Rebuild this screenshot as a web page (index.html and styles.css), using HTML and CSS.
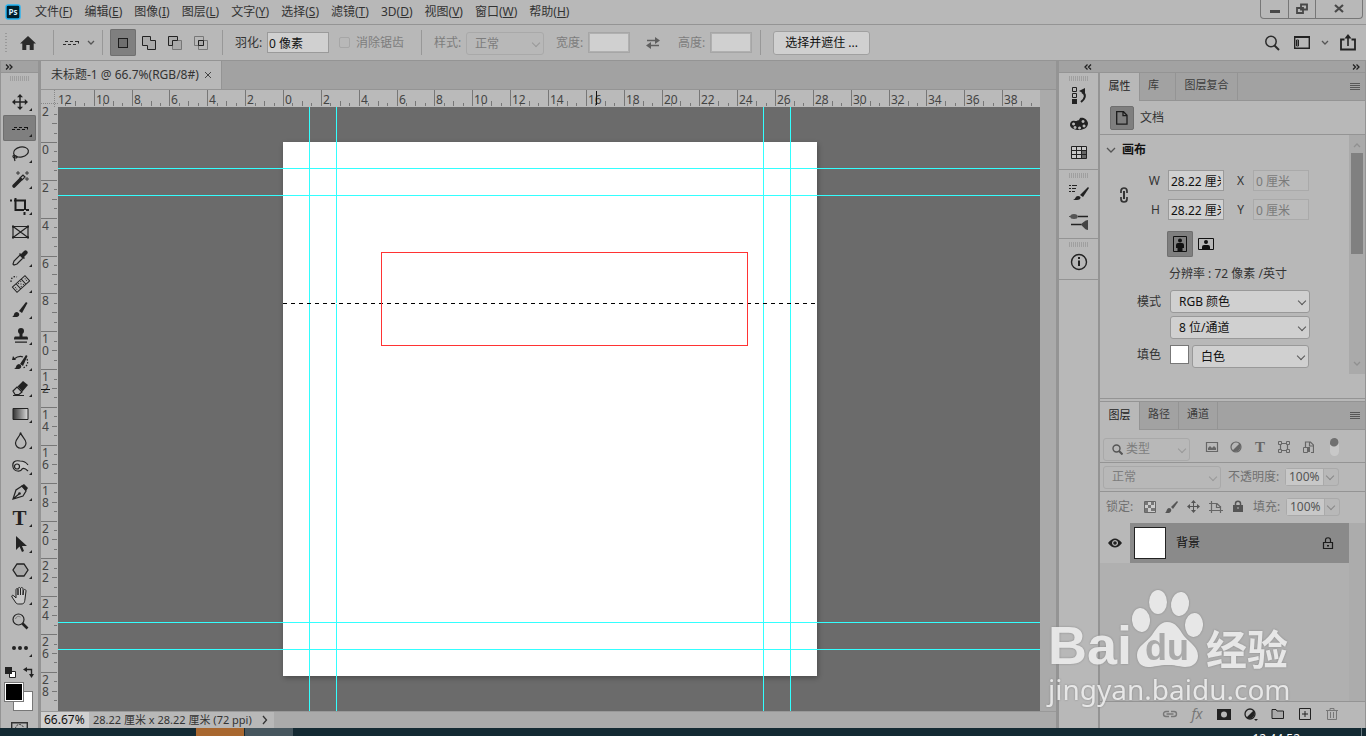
FILE: index.html
```html
<!DOCTYPE html>
<html lang="zh-CN">
<head>
<meta charset="utf-8">
<meta name="viewport" content="width=device-width, initial-scale=1">
<title>未标题-1</title>
<link rel="stylesheet" href="styles.css">
<script src="rulers.js" defer></script>
</head>
<body>
<header class="menubar">
  <svg class="logo" width="16" height="16" viewBox="0 0 16 16"><rect x="1" y="1" width="14" height="14" rx="2" fill="#001e2b" stroke="#20b4f5" stroke-width="1.4"/><text x="8" y="11" text-anchor="middle" class="logo-text">Ps</text></svg>
  <nav class="menus">
    <a href="#">文件(<u>F</u>)</a><a href="#">编辑(<u>E</u>)</a><a href="#">图像(<u>I</u>)</a><a href="#">图层(<u>L</u>)</a><a href="#">文字(<u>Y</u>)</a><a href="#">选择(<u>S</u>)</a><a href="#">滤镜(<u>T</u>)</a><a href="#">3D(<u>D</u>)</a><a href="#">视图(<u>V</u>)</a><a href="#">窗口(<u>W</u>)</a><a href="#">帮助(<u>H</u>)</a>
  </nav>
  <div class="window-buttons">
    <button aria-label="最小化"><svg width="12" height="12"><path d="M1 7h10v3H1z" fill="#484848"/></svg></button>
    <button aria-label="还原"><svg width="12" height="12"><path d="M5 1.500h6v5H5zM1 5h6v5H1z" fill="#b8b8b8" stroke="#484848" stroke-width="1.800"/></svg></button>
    <button aria-label="关闭" class="wide"><svg width="12" height="12"><path d="M2 2l8 7M10 2l-8 7" stroke="#484848" stroke-width="2.200"/></svg></button>
  </div>
</header>

<section class="options">
  <span class="grip-v"></span>
  <button class="home" aria-label="主页"><svg width="18" height="16"><path d="M9 1L1 8.500h2.300V15h4v-5h3.400v5h4V8.500H17z" fill="#2b2b2b"/></svg></button>
  <i class="sep"></i>
  <button class="tool-preset" aria-label="工具预设"><svg width="18" height="8"><path d="M1 5.500h3M6 5.500h3M11 5.500h3M3 2.500h3M8 2.500h3M13 2.500h4M16.500 2.500v2" stroke="#2b2b2b" fill="none"/></svg><svg width="8" height="6"><path d="M1 1l3 3 3-3" class="chev"/></svg></button>
  <i class="sep"></i>
  <div class="modes">
    <button class="on" aria-label="新选区"><svg width="14" height="14"><rect x="2.500" y="2.500" width="9" height="9" fill="#6f6f6f" stroke="#1c1c1c"/></svg></button>
    <button aria-label="添加到选区"><svg width="14" height="14"><path d="M.5.5h8v4h5v9h-8v-4h-5z" fill="#aaa" stroke="#222"/></svg></button>
    <button aria-label="从选区减去"><svg width="14" height="14"><path d="M4.500 4.500h9v9h-9z" fill="#aaa" stroke="#777"/><path d="M4.500 9.500h-4v-9h9v4h-5z" fill="#aaa" stroke="#222"/></svg></button>
    <button aria-label="与选区交叉"><svg width="14" height="14"><path d="M.5.5h9v9h-9zM4.500 4.500h9v9h-9z" fill="none" stroke="#777"/><path d="M4.500 4.500h5v5h-5z" fill="#aaa" stroke="#222"/></svg></button>
  </div>
  <i class="sep"></i>
  <label class="lbl" for="feather">羽化:</label>
  <input id="feather" class="field feather" value="0 像素">
  <label class="check off"><input type="checkbox" disabled>消除锯齿</label>
  <i class="sep style-sep"></i>
  <label class="lbl off" for="style">样式:</label>
  <span class="select off style-select"><select id="style" disabled><option>正常</option></select></span>
  <label class="lbl off" for="w">宽度:</label>
  <input id="w" class="field size" disabled>
  <svg class="swap" width="14" height="14"><path d="M1 4.500h9M4 9.500h9" stroke="#606060" stroke-width="1.600"/><path d="M9 1l5 3.500L9 8zM5 6L0 9.500 5 13z" fill="#606060"/></svg>
  <label class="lbl off" for="h">高度:</label>
  <input id="h" class="field size" disabled>
  <i class="sep"></i>
  <button class="push">选择并遮住 ...</button>
  <div class="options-right">
    <button aria-label="搜索"><svg width="16" height="16"><circle cx="7" cy="6.500" r="5.200" fill="none" stroke="#2b2b2b" stroke-width="1.500"/><path d="M10.500 10.500L15 15" stroke="#2b2b2b" stroke-width="2"/></svg></button>
    <button aria-label="工作区"><svg width="16" height="13"><path d="M.7.7h14.600v11.600H.7z" fill="none" stroke="#222" stroke-width="1.400"/><path d="M1 1.500h14" stroke="#222"/><path d="M2.500 4h2v6h-2zM2.500 6h2M2.500 8h2" fill="none" stroke="#222"/></svg></button>
    <button aria-label="工作区列表"><svg width="8" height="6"><path d="M1 1l3 3 3-3" class="chev"/></svg></button>
    <button aria-label="共享"><svg width="16" height="17"><path d="M4.500 5.500H1v10h14v-10h-3.500" fill="none" stroke="#222" stroke-width="1.800"/><path d="M8 12V2" stroke="#222" stroke-width="1.600"/><path d="M4.500 4.500L8 0l3.500 4.500z" fill="#222"/></svg></button>
  </div>
</section>

<main class="workspace">
  <aside class="toolbar">
    <div class="bar-head"><button aria-label="展开工具栏"><svg width="8" height="6"><path d="M1 .5L3.500 3 1 5.500M4.500 .5L7 3 4.500 5.500" class="dbl"/></svg></button></div>
    <span class="grip-h"></span>
    <div class="tools">
      <button class="more" aria-label="移动"><svg viewBox="0 0 20 20"><path d="M10 4v12M4 10h12" stroke="#222" stroke-width="1.400"/><path d="M10 2l3 3.200H7zM10 18l-3-3.200h6zM2 10l3.200-3v6zM18 10l-3.200 3V7z" fill="#222"/></svg></button>
      <button class="more on" aria-label="单行选框"><svg viewBox="0 0 20 20"><path d="M2 11.500h3M7 11.500h3M12 11.500h3M4 9.500h3M9 9.500h3M14 9.500h4M17.500 9.500v2" stroke="#111" fill="none"/></svg></button>
      <button class="more" aria-label="套索"><svg viewBox="0 0 20 20"><ellipse cx="11" cy="8" rx="7.500" ry="5" transform="rotate(-12 11 8)" class="ln"/><path d="M4 11c-2 1-1 3 1 3s3-1 1-2-2 2-1 5" class="ln"/></svg></button>
      <button class="more" aria-label="魔棒"><svg viewBox="0 0 20 20"><path d="M4 16l6.500-6.500" stroke="#222" stroke-width="3.600" stroke-linecap="round"/><path d="M10 8l3-3 2 2-3 3z" class="ln"/><path d="M8 1v4M6 3h4M17 1v4M15 3h4M17 7v4M15 9h4" stroke="#222" stroke-width=".8"/></svg></button>
      <button class="more" aria-label="裁剪"><svg viewBox="0 0 20 20"><path d="M0 4.500h2M4 4.500h11V14M5.500 2v12H14M16 14h3M14.500 16v3" fill="none" stroke="#1d1d1d" stroke-width="2"/></svg></button>
      <button aria-label="画框"><svg viewBox="0 0 20 20"><path d="M3 4.500h15v11H3zM3 4.500l15 11M18 4.500l-15 11" class="ln"/><path d="M2 3.500h2v2H2zM17 3.500h2v2h-2zM2 14.500h2v2H2zM17 14.500h2v2h-2z" fill="#222"/></svg></button>
      <button class="more" aria-label="吸管"><svg viewBox="0 0 20 20"><path d="M4 17l-1-1 1-3 6-6 3 3-6 6z" class="ln"/><path d="M9 6l5 5 1-1-1-1 3-3a2 2 0 0 0-3-3l-3 3-1-1z" fill="#222"/></svg></button>
      <button class="more" aria-label="修复画笔"><svg viewBox="0 0 20 20"><g transform="rotate(-42 11 10)"><path d="M2.500 6.500h17v7h-17zM7.500 6.500v7M14.500 6.500v7" fill="none" stroke="#222"/><path d="M9 8h1M12 8h1M9 12h1M12 12h1M10.500 10h1M4 9h1M4 11h1M17 9h1M17 11h1" stroke="#222"/></g><path d="M1 8c0-5 3-6 6-5" class="ln" stroke-dasharray="1.500 1.500"/></svg></button>
      <button class="more" aria-label="画笔"><svg viewBox="0 0 20 20"><path d="M9 11L16 2l1.500 1L12 13z" fill="#222"/><path d="M2 17c3-1 1-5 5-5 3 1 3 4 0 5z" fill="#222"/></svg></button>
      <button class="more" aria-label="仿制图章"><svg viewBox="0 0 20 20"><circle cx="11" cy="5" r="3" fill="#222"/><path d="M9.500 7h3v3.500H17c1 0 1 3 1 3H4s0-3 1-3h4.500zM5 15.500h12v1.200H5z" fill="#222"/></svg></button>
      <button class="more" aria-label="历史记录画笔"><svg viewBox="0 0 20 20"><path d="M10 12l6-9 1.500 1L13 14z" fill="#222"/><path d="M4 17c3-1 1-4 5-5 3 1 3 4 0 5z" fill="#222"/><path d="M4 7c4-3 7-3 9-2" class="ln"/><path d="M2 8l1-4 3 4z" fill="#222"/><path d="M17 7c2 5-1 8-4 9" class="ln" stroke-dasharray="1.500 1.500"/></svg></button>
      <button class="more" aria-label="橡皮擦"><svg viewBox="0 0 20 20"><path d="M3 13l4-4 5 5-3 2.500H5z" class="ln"/><path d="M7.500 8.500L13 3l5 4-5.500 6.500zM3 17h11v1H3z" fill="#222"/></svg></button>
      <button class="more" aria-label="渐变"><svg viewBox="0 0 20 20"><defs><linearGradient id="gr"><stop stop-color="#333"/><stop offset="1" stop-color="#ddd"/></linearGradient></defs><path d="M3 4.500h15v11H3z" fill="url(#gr)" stroke="#222"/></svg></button>
      <button class="more" aria-label="模糊"><svg viewBox="0 0 20 20"><path d="M10.500 2.500C10 7 5.500 9 5.500 13a5 5 0 0 0 10.500 0c0-4-4.500-6-5.500-10.500z" class="ln"/></svg></button>
      <button class="more" aria-label="减淡"><svg viewBox="0 0 20 20"><path d="M18 9c-2-3-5-4-8-4-5-1-8 1-7 6 1 5 8 5 9 2 2-2 4 0 6 2" fill="#c5c5c5" stroke="#222" stroke-width="1.200"/><circle cx="7" cy="10.500" r="2.500" class="ln"/></svg></button>
      <button class="more" aria-label="钢笔"><svg viewBox="0 0 20 20"><path d="M3 17l3-9 6-4 4 5-3 5zM3 17l6-5" class="ln"/><circle cx="9.500" cy="11.500" r="1.300" fill="#222"/><path d="M11 4l3-2 4 4-2 3z" fill="#222"/></svg></button>
      <button class="more" aria-label="文字"><span class="type-icon">T</span></button>
      <button class="more" aria-label="路径选择"><svg viewBox="0 0 20 20"><path d="M6 2v14l3.500-3.500L12 18l2-1-2-5h5z" fill="#222"/></svg></button>
      <button class="more" aria-label="多边形"><svg viewBox="0 0 20 20"><path d="M7 4h7l4 6-4 6H7l-4-6z" fill="#aaa" stroke="#222" stroke-width="1.300"/></svg></button>
      <button class="more" aria-label="抓手"><svg viewBox="0 0 20 20"><path d="M6 17L2 11c-1-2 1-2 2-1l2 2V4c0-2 2-2 2 0v5V3c0-2 2.500-2 2.500 0v6V3c0-2 2.500-2 2.500 0v6l.5-4c0-2 2.500-2 2.500 0l-1 8c-.5 4-1 5-4 5H9c-1 0-2 0-3-1z" fill="#c8c8c8" stroke="#222"/></svg></button>
      <button aria-label="缩放"><svg viewBox="0 0 20 20"><circle cx="8.500" cy="7.500" r="5.500" class="ln"/><path d="M5.500 7c1-3 3-3 5-2" fill="none" stroke="#777"/><path d="M12.500 11.500L17.500 16.500" stroke="#222" stroke-width="2.600"/></svg></button>
      <button class="more" aria-label="编辑工具栏"><svg viewBox="0 0 20 20"><path d="M2 10a2 2 0 1 0 4 0 2 2 0 1 0-4 0zM8 10a2 2 0 1 0 4 0 2 2 0 1 0-4 0zM14 10a2 2 0 1 0 4 0 2 2 0 1 0-4 0z" fill="#222"/></svg></button>
    </div>
    <div class="swatch-actions">
      <button aria-label="默认颜色"><svg width="11" height="11"><path d="M4.500 4.500h6v6h-6z" fill="#fff" stroke="#222"/><path d="M0 0h7v7H0z" fill="#222"/></svg></button>
      <button aria-label="切换颜色"><svg width="11" height="11"><path d="M3 2.500h5.500V8" fill="none" stroke="#222" stroke-width="1.400"/><path d="M4 0v5L0 2.500zM6 7h5L8.500 11z" fill="#222"/></svg></button>
    </div>
    <div class="swatches"><button class="bg" aria-label="背景色"></button><button class="fg" aria-label="前景色"></button></div>
    <button class="quick-mask" aria-label="快速蒙版"><svg width="18" height="14"><path d="M.7.7h15.600v12H.7z" fill="none" stroke="#333" stroke-width="1.400"/><circle cx="8.500" cy="6.500" r="4" fill="none" stroke="#333" stroke-dasharray="2 1"/></svg></button>
  </aside>

  <section class="document">
    <div class="doc-tabs"><div class="doc-tab"><span>未标题-1 @ 66.7%(RGB/8#)</span><button aria-label="关闭文档"><svg width="8" height="8"><path d="M1 1l6 6M7 1L1 7" stroke="#444"/></svg></button></div></div>
    <div class="view">
      <span class="corner"></span>
      <svg class="ruler ruler-h" id="ruler-h"></svg>
      <svg class="ruler ruler-v" id="ruler-v"></svg>
      <div class="canvas">
        <div class="artboard"></div>
        <i class="guide v v1"></i><i class="guide v v2"></i><i class="guide v v3"></i><i class="guide v v4"></i>
        <i class="guide h h1"></i><i class="guide h h2"></i><i class="guide h h3"></i><i class="guide h h4"></i>
        <i class="marquee"></i>
        <i class="frame"></i>
      </div>
      <span class="gutter"></span>
    </div>
    <footer class="status"><input class="zoom" aria-label="缩放比例" value="66.67%"><span class="info">28.22 厘米 x 28.22 厘米 (72 ppi)</span><button aria-label="状态信息"><svg width="6" height="10"><path d="M1 1l3.500 4L1 9" fill="none" stroke="#333" stroke-width="1.300"/></svg></button></footer>
  </section>

  <aside class="dock">
    <div class="bar-head dock-head">
      <button aria-label="展开面板"><svg width="8" height="6"><path d="M3.500 .5L1 3l2.500 2.500M7 .5L4.500 3 7 5.500" class="dbl"/></svg></button>
      <button aria-label="折叠为图标"><svg width="8" height="6"><path d="M1 .5L3.500 3 1 5.500M4.500 .5L7 3 4.500 5.500" class="dbl"/></svg></button>
    </div>
    <div class="icon-dock">
      <div class="icon-group">
        <span class="grip-h"></span>
        <button aria-label="历史记录"><svg viewBox="0 0 20 20"><path d="M3.500 1.500h4v4h-4zM3.500 7.500h4v4h-4z" fill="none" stroke="#222"/><path d="M3 13h5v5H3z" fill="#222"/><path d="M12 16c5-4 5-8 1-10" fill="none" stroke="#222" stroke-width="2"/><path d="M10 5l6-3v6z" fill="#222"/></svg></button>
        <button aria-label="颜色"><svg viewBox="0 0 20 20"><path fill-rule="evenodd" d="M11 4c2-1 7 0 8 5 0 5-5 7-9 7S1 14 1 11s2-5 5-4c2 0 4 0 5-3zM4.500 8.500a1.500 1.500 0 1 0 .1 0zM6 12a1.500 1.500 0 1 0 .1 0zM10.500 12.500a1.500 1.500 0 1 0 .1 0zM15 10.500a1.500 1.500 0 1 0 .1 0zM14 6a1.500 1.500 0 1 0 .1 0z" fill="#222"/></svg></button>
        <button aria-label="色板"><svg viewBox="0 0 20 20"><path d="M2 4h16v12H2z" fill="#c8c8c8"/><path d="M12 8h6v8h-6z" fill="#666"/><path d="M2.500 4.500h15v12h-15zM2.500 8.500h15M2.500 12.500h15M7.500 4v12M12.500 4v12" fill="none" stroke="#222"/></svg></button>
      </div>
      <div class="icon-group">
        <span class="grip-h"></span>
        <button aria-label="画笔"><svg viewBox="0 0 20 20"><path d="M0 2.500h2M3 2.500h5M0 5.500h2M3 5.500h4M0 8.500h2M3 8.500h3" stroke="#222"/><path d="M11 12l8-8 1 1-6 9z" fill="#222"/><path d="M4 17c3-1 2-4 5-4 4 0 3 4-1 4z" fill="#222"/></svg></button>
        <button aria-label="画笔设置"><svg viewBox="0 0 20 20"><path d="M9 5.500h10M2 13.500h10" stroke="#222" stroke-width="1.600"/><ellipse cx="5" cy="5.500" rx="3.800" ry="2.500" fill="#555"/><path d="M0 5h3v1H0z" fill="#555"/><path d="M12 13c2-1 4-4 7-4v10c-3 0-4-3-7-5z" fill="#444"/></svg></button>
      </div>
      <div class="icon-group">
        <span class="grip-h"></span>
        <button aria-label="信息"><svg viewBox="0 0 20 20"><circle cx="10" cy="10" r="7.500" fill="none" stroke="#222" stroke-width="1.400"/><path d="M9 5h2v2H9zM9 8.500h2V14H9z" fill="#222"/></svg></button>
      </div>
    </div>
    <div class="panels">
      <section class="panel props">
        <div class="tabs"><button class="active">属性</button><button class="lib">库</button><button class="comps">图层复合</button><button class="panel-menu" aria-label="面板菜单"></button></div>
        <div class="doc-row"><span class="doc-icon"><svg width="12" height="14"><path d="M.7.7h6.800l3.500 3.600v8.900H.7zM7 .7v4h4" fill="none" stroke="#1c1c1c" stroke-width="1.300"/></svg></span>文档</div>
        <div class="props-body">
          <div class="props-form">
            <h2><svg width="10" height="7"><path d="M1 1l4 4 4-4" class="chev"/></svg>画布</h2>
            <div class="dims">
              <button class="link" aria-label="链接宽高"><svg width="10" height="16"><path d="M2 6V4c0-4 6-4 6 0v2M2 10v2c0 4 6 4 6 0v-2" fill="none" stroke="#333" stroke-width="1.700"/><path d="M5 4v8" stroke="#333" stroke-width="2"/></svg></button>
              <label for="cw">W</label><input id="cw" class="field" value="28.22 厘米"><label for="cx">X</label><input id="cx" class="field" value="0 厘米" disabled>
              <label for="ch">H</label><input id="ch" class="field" value="28.22 厘米"><label for="cy">Y</label><input id="cy" class="field" value="0 厘米" disabled>
            </div>
            <div class="orient">
              <button class="on" aria-label="纵向"><svg width="14" height="16"><path d="M.5.5h13v15H.5z" fill="none" stroke="#111"/><circle cx="7" cy="4.500" r="2" fill="#111"/><path d="M3 9q0-2 2-2h4q2 0 2 2v3H9.500v3h-5v-3H3z" fill="#111"/></svg></button>
              <button aria-label="横向"><svg width="16" height="12"><path d="M.5.5h15v11H.5z" fill="none" stroke="#111"/><circle cx="8" cy="4" r="2" fill="#111"/><path d="M4 11V9q0-2 2-2h4q2 0 2 2v2z" fill="#111"/></svg></button>
            </div>
            <p class="resolution">分辨率 : 72 像素 /英寸</p>
            <div class="mode">
              <label for="mode">模式</label><span class="select"><select id="mode"><option>RGB 颜色</option></select></span>
              <span class="select second"><select aria-label="位深"><option>8 位/通道</option></select></span>
            </div>
            <div class="fill"><label for="fill">填色</label><button class="chip" aria-label="画布颜色"></button><span class="select"><select id="fill"><option>白色</option></select></span></div>
          </div>
          <div class="scroll"><svg width="8" height="6"><path d="M1 5l3-3 3 3" class="chev faint"/></svg><i></i><svg width="8" height="6"><path d="M1 1l3 3 3-3" class="chev faint"/></svg></div>
        </div>
      </section>
      <section class="panel layers">
        <div class="tabs"><button class="active">图层</button><button>路径</button><button>通道</button><button class="panel-menu" aria-label="面板菜单"></button></div>
        <div class="row filter">
          <span class="select off kind"><svg width="11" height="11"><circle cx="4.500" cy="4.500" r="3.500" fill="none" stroke="#555" stroke-width="1.400"/><path d="M7 7l3.500 3.500" stroke="#555" stroke-width="2"/></svg><select aria-label="筛选类型" disabled><option>类型</option></select></span>
          <button aria-label="像素图层"><svg width="14" height="12"><path d="M1.500 1.500h11v9h-11z" class="g"/><path d="M3 9V7l2-2 2 2 2-2 2 2v2z" fill="#666"/></svg></button>
          <button aria-label="调整图层"><svg width="12" height="12"><circle cx="6" cy="6" r="5" class="g"/><path d="M9.500 2.500a5 5 0 0 1-7 7z" fill="#666"/></svg></button>
          <button aria-label="文字图层"><span class="type-small">T</span></button>
          <button aria-label="形状图层"><svg width="12" height="12"><path d="M2.500 2.500h7v7h-7z" class="g"/><path d="M.5.5h3v3h-3zM8.500.5h3v3h-3zM.5 8.500h3v3h-3zM8.500 8.500h3v3h-3z" fill="#b8b8b8" stroke="#666"/></svg></button>
          <button aria-label="智能对象"><svg width="12" height="13"><path d="M3.500 6V1h5l3 3v7.500H9M7.500 1v4h4" class="g"/><path d="M1.500 6.500h4v5h-4z" fill="#b8b8b8" stroke="#666"/><path d="M5 6h3v5H5z" fill="#666"/></svg></button>
          <button class="toggle" aria-label="筛选开关"></button>
        </div>
        <div class="row">
          <span class="select off blend"><select aria-label="混合模式" disabled><option>正常</option></select></span>
          <label for="opacity">不透明度:</label><span class="percent"><input id="opacity" value="100%" disabled><i class="drop"></i></span>
        </div>
        <div class="row lock">
          <span>锁定:</span>
          <button aria-label="锁定透明像素"><svg width="12" height="12"><path d="M.5.5h11v11H.5z" fill="#ccc" stroke="#666"/><path d="M1 1h3v3H1zM7 1h3v3H7zM4 4h3v3H4zM1 7h3v4H1zM7 7h4v3H7z" fill="#777"/></svg></button>
          <button aria-label="锁定图像像素"><svg width="13" height="13"><path d="M6 7l6-6 1 1-5 7z" fill="#555"/><path d="M0 13c2-1 1-4 4-5 3 0 3 4 0 5z" fill="#555"/></svg></button>
          <button aria-label="锁定位置"><svg width="13" height="13"><path d="M6.500 2v9M2 6.500h9" stroke="#555"/><path d="M6.500 0l2.500 3H4zM6.500 13L4 10h5zM0 6.500L3 4v5zM13 6.500L10 9V4z" fill="#555"/></svg></button>
          <button aria-label="防止嵌套"><svg width="14" height="12"><path d="M2.500 0v12M0 2.500h8l3 3M11.500 5v7M0 9.500h14M7.500 3v3.500H11" class="g"/></svg></button>
          <button aria-label="全部锁定"><svg width="12" height="13"><path d="M1 5h10v7H1z" fill="#555"/><path d="M3.500 5V3.500c0-3 5-3 5 0V5" fill="none" stroke="#555" stroke-width="1.500"/><path d="M5.500 7h1v2h-1z" fill="#bbb"/></svg></button>
          <label for="fillpct">填充:</label><span class="percent"><input id="fillpct" value="100%" disabled><i class="drop"></i></span>
        </div>
        <div class="list">
          <div class="items"><div class="layer">
            <button class="eye" aria-label="可见性"><svg width="14" height="10"><path fill-rule="evenodd" d="M0 5q7-9 14 0-7 9-14 0zM7 2a3 3 0 1 0 .1 0z" fill="#222"/><circle cx="7" cy="5" r="1.800" fill="#222"/></svg></button>
            <div class="layer-main"><span class="thumb"></span><span class="name">背景</span><svg width="12" height="13"><path d="M1.500 5.500h9v6h-9zM3.500 5V3c0-3 5-3 5 0v2" fill="none" stroke="#1c1c1c" stroke-width="1.200"/><path d="M5 8h2v1.500H5z" fill="#1c1c1c"/></svg></div>
          </div></div>
          <div class="track"></div>
        </div>
        <footer class="layer-actions">
          <button aria-label="链接图层"><svg width="16" height="10"><path d="M7 2.500H4a2.500 2.500 0 0 0 0 5h3M9 2.500h3a2.500 2.500 0 0 1 0 5H9M4.500 5h7" fill="none" stroke="#777" stroke-width="1.400"/></svg></button>
          <button class="fx" aria-label="图层样式">fx</button>
          <button aria-label="添加蒙版"><svg width="14" height="11"><path d="M0 0h14v11H0z" fill="#222"/><circle cx="7" cy="5.500" r="3" fill="#b8b8b8"/></svg></button>
          <button aria-label="新建调整图层"><svg width="14" height="13"><circle cx="6" cy="6" r="5" fill="none" stroke="#222" stroke-width="1.300"/><path d="M9.500 2.500a5 5 0 0 1-7 7z" fill="#222"/><path d="M10 11h4l-2 2z" fill="#222"/></svg></button>
          <button aria-label="新建组"><svg width="14" height="12"><path d="M1 1.500h4l1 1.500h6.500v7.500H1z" fill="#aaa" stroke="#222"/></svg></button>
          <button aria-label="新建图层"><svg width="12" height="12"><path d="M.5.5h11v11H.5zM6 3v6M3 6h6" fill="none" stroke="#222"/></svg></button>
          <button aria-label="删除图层"><svg width="12" height="12"><path d="M0 2.500h12M4 2V.5h4V2M1.500 3v8.500h9V3M4.500 4v6M7.500 4v6" fill="none" stroke="#777"/></svg></button>
        </footer>
      </section>
    </div>
  </aside>
</main>

<footer class="taskbar"><span class="task hot"></span><span class="task"></span><time>12:44:52</time><i class="peek"></i></footer>

<div class="watermark">
  <div class="brand"><span class="bai">Bai</span><svg width="72" height="80" viewBox="0 0 72 80"><g fill="#ececec"><ellipse cx="10" cy="31" rx="9" ry="12" transform="rotate(-6 10 31)"/><ellipse cx="27" cy="13" rx="9" ry="12"/><ellipse cx="49" cy="15" rx="9" ry="12" transform="rotate(8 49 15)"/><ellipse cx="63" cy="36" rx="9" ry="12" transform="rotate(4 63 36)"/><path d="M36 33c9 0 12 7 17 14 6 7 14 11 14 20 0 8-7 11-13 11-8-1-10-2-18-2s-12 2-19 2C10 78 6 73 6 66c0-9 9-12 15-20 4-6 8-13 15-13z"/></g><text x="36" y="71" text-anchor="middle" class="du">du</text></svg><span class="jy">经验</span></div>
  <div class="site">jingyan.baidu.com</div>
</div>
</body>
</html>
```
FILE: styles.css
```css
* { box-sizing: border-box; }
html, body { height: 100%; }
body {
  --bg: #b8b8b8;
  --tab: #a2a2a2;
  --line: #949494;
  --dark: #7f7f7f;
  --field: #d0d0d0;
  margin: 0;
  display: flex;
  flex-direction: column;
  overflow: hidden;
  background: var(--bg);
  color: #333;
  font: 12px/16px "Noto Sans", "Noto Sans CJK SC", sans-serif;
}
button, input, select { font: inherit; color: inherit; }
button { border: 0; padding: 0; background: none; display: flex; align-items: center; justify-content: center; }
svg { display: block; flex: none; }
input { min-width: 0; }
a { color: inherit; text-decoration: none; }
.chev { fill: none; stroke: #555; stroke-width: 1.3; }
.faint { stroke: #909090; }
.dbl { fill: none; stroke: #222; stroke-width: 1.3; }
.ln { fill: none; stroke: #222; stroke-width: 1.2; }
.g { fill: none; stroke: #666; stroke-width: 1.2; }

.menubar { flex: 0 0 25px; display: flex; border-bottom: 1px solid var(--line); padding-left: 5px; }
.logo { margin-top: 4px; }
.logo-text { font: bold 8px "Open Sans", sans-serif; fill: #d6f0ff; }
.menus { display: flex; gap: 12px; align-items: center; padding-left: 14px; white-space: nowrap; }
.window-buttons { margin: 0 3px 0 auto; display: flex; height: 19px; border: 1px solid #777; border-top: 0; border-radius: 0 0 4px 4px; }
.window-buttons button { width: 27px; }
.window-buttons button + button { border-left: 1px solid #777; }
.window-buttons .wide { width: 47px; }

.options { flex: 0 0 36px; display: flex; align-items: center; border-bottom: 1px solid var(--line); padding: 0 10px 0 5px; white-space: nowrap; }
.grip-v { width: 2px; height: 20px; background: repeating-linear-gradient(#999 0 1px, transparent 1px 3px); }
.home { margin: 0 16px 0 12px; }
.sep { width: 1px; height: 25px; background: #989898; flex: none; }
.tool-preset { gap: 7px; margin: 0 7px; width: 34px; }
.modes { display: flex; margin: 0 8px 0 7px; }
.modes button { width: 26px; height: 27px; border-radius: 2px; }
.on { background: var(--dark); box-shadow: inset 0 0 0 1px #6f6f6f; }
.lbl { margin: 0 4px 0 12px; width: 28px; }
.field { height: 21px; border: 1px solid #9a9a9a; background: var(--field); padding: 0 2px; color: #111; border-radius: 0; }
.field:disabled { border-color: #aaa; background: #bbb; color: #7a7a7a; }
.feather { width: 62px; padding: 0 1px; }
.check { display: flex; align-items: center; gap: 6px; margin-left: 10px; }
.check input { appearance: none; width: 11px; height: 11px; margin: 0; border: 1px solid #a6a6a6; border-radius: 2px; }
.off { color: #7d7d7d; }
.style-sep { margin-left: 17px; }
.select { position: relative; display: flex; height: 23px; border: 1px solid #999; border-radius: 3px; background: var(--field); color: #111; }
.select select { appearance: none; width: 100%; border: 0; background: none; padding: 0 16px 0 8px; color: inherit; opacity: 1; }
.select::after, .drop::after { content: ""; position: absolute; right: 4px; top: 7px; width: 5px; height: 5px; border: solid #555; border-width: 0 1px 1px 0; transform: rotate(45deg); }
.select.off { border-color: #a9a9a9; background: transparent; color: #7d7d7d; }
.select.off::after { border-color: #999; }
.style-select { width: 78px; margin-top: 2px; }
.size { width: 42px; }
.size:disabled { background: var(--field); border: 2px solid #b0b0b0; outline-offset: -1px; outline: 1px solid #a6a6a6; }
.size + .sep { margin-left: 8px; }
.swap { margin: 0 6px 0 16px; }
.push { height: 24px; width: 97px; margin-left: 12px; border: 1px solid #a0a0a0; border-radius: 3px; background: var(--field); color: #111; }
.options-right { display: flex; align-items: center; gap: 11px; margin-left: auto; }
.options-right button:nth-child(2) { margin-left: 3px; }

.workspace { flex: 1; min-height: 0; display: grid; grid-template-columns: 40px minmax(0, 1fr) 309px; }
.bar-head { height: 12px; background: var(--tab); border-bottom: 1px solid var(--line); display: flex; align-items: center; flex: none; }
.grip-h { display: block; width: 20px; height: 5px; background: repeating-linear-gradient(90deg, #999 0 1px, transparent 1px 2px); opacity: .8; }
.toolbar { border: solid var(--line); border-width: 0 2px 0 1px; overflow: hidden; min-height: 0; }
.toolbar .bar-head { padding-left: 4px; }
.toolbar .grip-h { margin: 3px auto 8px; }
.tools { display: flex; flex-direction: column; padding-left: 2px; }
.tools button { position: relative; width: 33px; height: 26px; border-radius: 2px; }
.tools svg { width: 20px; height: 20px; }
.more::after { content: ""; position: absolute; right: 4px; bottom: 4px; border: solid transparent; border-width: 3px 0 0 3px; border-right: 3px solid #222; border-left-width: 0; border-bottom: 0; }
.type-icon { font: bold 21px/20px "Liberation Serif", serif; color: #222; }
.swatch-actions { display: flex; gap: 7px; margin: 6px 0 0 4px; height: 11px; }
.swatches { position: relative; width: 29px; height: 29px; margin: 4px 0 0 3px; }
.swatches button { position: absolute; width: 20px; height: 20px; border: 1px solid #777; }
.fg { left: 0; top: 0; background: #000; box-shadow: inset 0 0 0 1px #fff; }
.bg { left: 9px; top: 9px; background: #fff; }
.quick-mask { margin: 11px 0 0 10px; }

.document { display: flex; flex-direction: column; min-width: 0; min-height: 0; border-right: 1px solid var(--line); border-left: 1px solid var(--line); }
.doc-tabs { flex: 0 0 29px; background: var(--tab); border-bottom: 1px solid var(--line); display: flex; }
.doc-tab { display: flex; align-items: center; gap: 5px; padding: 0 9px 0 10px; background: var(--bg); border-right: 1px solid var(--line); white-space: nowrap; }
.view { flex: 1; min-height: 0; display: grid; grid-template: 17px minmax(0, 1fr) / 17px minmax(0, 1fr) 16px; background: #aaa; }
.corner { background: repeating-linear-gradient(90deg, #888 0 1px, transparent 1px 2px) 0 13px / 100% 1px no-repeat, repeating-linear-gradient(#888 0 1px, transparent 1px 2px) 13px 0 / 1px 100% no-repeat, #bababa; }
.ruler { width: 100%; height: 100%; background: #bababa; overflow: hidden; font-size: 12px; }
.ruler text { fill: #444; }
.ruler .tick { stroke: #777; }
.ruler .cursor { stroke: #111; }
.ruler-h { grid-area: 1 / 2; }
.ruler-v { grid-area: 2 / 1; }
.gutter { grid-area: 1 / 3 / 3 / 4; }
.canvas { grid-area: 2 / 2; position: relative; overflow: hidden; background: #6b6b6b; }
.artboard { position: absolute; left: 225px; top: 35px; width: 534px; height: 534px; background: #fff; box-shadow: 1px 2px 5px rgba(0, 0, 0, .3); }
.guide { position: absolute; background: #3ff; }
.v { width: 1px; top: 0; bottom: 0; }
.h { height: 1px; left: 0; right: 0; }
.v1 { left: 251px; } .v2 { left: 278px; } .v3 { left: 705px; } .v4 { left: 732px; }
.h1 { top: 61px; } .h2 { top: 88px; } .h3 { top: 515px; } .h4 { top: 542px; }
.marquee { position: absolute; left: 225px; top: 196px; width: 534px; height: 1px; background: repeating-linear-gradient(90deg, #000 0 4px, #fff 4px 8px); }
.frame { position: absolute; left: 323px; top: 145px; width: 367px; height: 94px; border: 1px solid #f33; }
.status { flex: 0 0 17px; display: flex; background: #aaa; border-top: 1px solid #999; }
.zoom { width: 48px; border: 0; padding: 0 3px; background: var(--field); color: #111; }
.info { padding: 0 4px; background: var(--bg); white-space: nowrap; font-size: 11px; }
.status button { padding: 0 6px; background: var(--bg); }

.dock { display: grid; grid-template: 12px minmax(0, 1fr) / 41px minmax(0, 1fr); min-height: 0; border: solid var(--line); border-width: 0 1px 0 2px; }
.dock-head { grid-column: 1 / -1; justify-content: space-between; padding: 0 5px 0 25px; }
.icon-dock { border-right: 2px solid var(--line); }
.icon-group { display: flex; flex-direction: column; align-items: center; padding: 3px 0; border-bottom: 1px solid var(--line); }
.icon-group .grip-h { margin-bottom: 1px; }
.icon-group button { width: 38px; height: 28px; }
.icon-group svg { width: 20px; height: 20px; }
.panels { display: flex; flex-direction: column; min-height: 0; }
.tabs { height: 28px; display: flex; background: var(--tab); border-bottom: 1px solid var(--line); font-size: 11px; }
.tabs button { width: 39px; border-right: 1px solid var(--line); color: #3c3c3c; padding-bottom: 3px; }
.tabs .active { width: 40px; background: var(--bg); margin-bottom: -1px; color: #222; }
.tabs .lib { width: 36px; padding-right: 8px; }
.tabs .comps { width: 62px; }
.tabs .panel-menu { width: 10px; height: 8px; margin: 10px 5px 0 auto; padding: 0; border: 0; background: repeating-linear-gradient(#444 0 1px, transparent 1px 2px); background-size: 100% 7px; background-repeat: no-repeat; opacity: .8; }
.props { flex: 0 0 326px; border-bottom: 1px solid var(--line); }
.doc-row { height: 34px; display: flex; align-items: center; gap: 6px; padding-left: 10px; border-bottom: 1px solid var(--line); }
.doc-icon { width: 24px; height: 24px; background: var(--dark); border: 1px solid #6f6f6f; border-radius: 2px; display: grid; place-items: center; }
.props-body { display: flex; justify-content: space-between; }
.props-form { padding: 7px 0 0 6px; width: 204px; flex: 1; }
.props h2 { margin: 0 0 12px; font-size: 12px; line-height: 16px; color: #111; display: flex; align-items: center; gap: 6px; }
.dims { display: grid; grid-template-columns: 20px 24px 56px 19px 56px; gap: 8px 5px; align-items: center; padding-left: 8px; }
.dims label { text-align: right; padding-right: 3px; }
.dims label:nth-of-type(even) { padding-right: 4px; }
.link { grid-row: 1 / 3; }
.dims .field { width: 56px; }
.orient { display: flex; align-items: center; gap: 5px; margin: 11px 0 0 61px; }
.orient button { width: 26px; height: 26px; border-radius: 2px; }
.orient button + button { width: 16px; }
.resolution { margin: 9px 0 8px 63px; }
.mode { display: grid; grid-template-columns: 25px 140px; gap: 3px 8px; align-items: center; padding-left: 31px; }
.second { grid-column: 2; }
.fill { display: grid; grid-template-columns: 25px 19px 118px; column-gap: 8px; padding: 6px 0 0 31px; }
.fill label { padding-top: 2px; }
.fill .select { width: 117px; margin-left: -5px; }
.chip { height: 19px; background: #fff; border: 1px solid #777; }
.scroll { width: 16px; height: 239px; background: #aaa; display: flex; flex-direction: column; align-items: center; padding: 7px 0; }
.scroll i { width: 12px; height: 101px; margin: 5px 0 auto; background: #808080; }
.layers { flex: 1; min-height: 0; display: flex; flex-direction: column; margin-top: 2px; border-top: 1px solid var(--line); }
.layers .tabs { flex: 0 0 28px; }
.row { flex: 0 0 29px; display: flex; align-items: center; border-bottom: 1px solid var(--line); padding-left: 3px; color: #707070; white-space: nowrap; }
.filter { flex-basis: 33px; gap: 12px; padding-top: 6px; }
.filter > button { width: 12px; height: 14px; margin-top: -4px; }
.kind { width: 87px; height: 23px; align-items: center; padding-left: 8px; margin-right: 4px; }
.kind select { padding-left: 3px; }
.type-small { font: bold 15px/14px "Liberation Serif", serif; color: #666; }
.filter .toggle { width: 9px; height: 18px; border-radius: 5px; margin-left: 4px; background: radial-gradient(circle at 4px 4px, #707070 0 4px, #c8c8c8 5px); }
.blend { width: 118px; margin-right: 7px; }
.row label { width: 53px; }
.percent { position: relative; display: flex; width: 54px; height: 18px; margin-left: 4px; border: 1px solid #aaa; border-radius: 3px; }
.percent input { width: 37px; border: 0; padding: 0 3px; background: #c8c8c8; color: #555; }
.drop { position: relative; flex: 1; border-left: 1px solid #aaa; }
.drop::after { top: 4px; right: 5px; border-color: #888; }
.lock { flex-basis: 31px; border: 0; gap: 9px; padding: 0 0 2px 6px; }
.lock button { width: 13px; height: 14px; }
.lock > span:first-child { width: 28px; }
.lock label { width: 29px; }
.lock .percent { margin-left: -5px; }
.list { flex: 1; min-height: 0; display: flex; background: #b0b0b0; border-bottom: 1px solid var(--line); }
.items { flex: 1; }
.track { width: 16px; background: #acacac; }
.layer { height: 40px; display: flex; background: var(--bg); }
.eye { width: 30px; }
.layer-main { flex: 1; display: flex; align-items: center; background: #8a8a8a; color: #111; padding: 0 15px 0 4px; }
.thumb { width: 32px; height: 32px; border: 1px solid #222; background: #fff; }
.name { margin: 0 auto 0 10px; }
.layer-actions { flex: 0 0 26px; display: flex; align-items: center; justify-content: flex-end; gap: 11px; padding: 0 25px 2px 0; }
.layer-actions button { width: 16px; height: 16px; }
.fx { font: italic 14px/16px "Noto Sans", sans-serif; color: #777; }

.taskbar { flex: 0 0 8px; display: flex; overflow: hidden; background: #142a33; padding: 0 4px 0 196px; }
.task { width: 48px; margin-right: 1px; background: #46565e; }
.hot { background: #a8672f; }
.taskbar time { margin: 3px 61px 0 auto; color: #fff; }
.peek { width: 1px; background: #6b7b82; }

.watermark { position: absolute; right: 75px; bottom: 27px; width: 243px; color: #ececec; opacity: .92; filter: drop-shadow(0 0 1px #888); pointer-events: none; }
.brand { display: flex; align-items: flex-end; height: 80px; }
.bai { width: 83px; font: bold 54px/48px "Liberation Sans", sans-serif; }
.du { font: bold 36px "Liberation Sans", sans-serif; fill: #aaa; }
.jy { font: bold 41px/44px "Noto Sans CJK SC", sans-serif; margin-left: 3px; white-space: nowrap; }
.site { font: 28px/40px "Noto Sans", sans-serif; }
```
FILE: rulers.js
```js
// Draws both rulers: one labelled division is 2 cm, split in four ticks.
const NS = "http://www.w3.org/2000/svg";
const STEP = 37.85;

function add(parent, tag, attrs, text) {
  const el = document.createElementNS(NS, tag);
  for (const key in attrs) el.setAttribute(key, attrs[key]);
  if (text !== undefined) el.textContent = text;
  parent.appendChild(el);
}

function line(svg, horizontal, at, from, to, cls) {
  const p = Math.round(at) + 0.5;
  add(svg, "line", horizontal
    ? { x1: p, x2: p, y1: from, y2: to, class: cls }
    : { y1: p, y2: p, x1: from, x2: to, class: cls });
}

function drawRuler(id, origin, first, last, horizontal, cursor) {
  const svg = document.getElementById(id);
  for (let i = first; i <= last; i++) {
    const at = origin + i * STEP;
    line(svg, horizontal, at, 0, 16, "tick");
    for (let q = 1; q < 4; q++) {
      line(svg, horizontal, at + q * STEP / 4, q === 2 ? 11 : 13, 16, "tick");
    }
    const label = String(Math.abs(i * 2));
    if (horizontal) {
      add(svg, "text", { x: Math.round(at) + 2, y: 14 }, label);
    } else {
      [...label].forEach((digit, n) =>
        add(svg, "text", { x: 1, y: Math.round(at) + 12 + n * 12 }, digit));
    }
  }
  line(svg, horizontal, cursor, horizontal ? 1 : 0, horizontal ? 15 : 9, "cursor");
}

drawRuler("ruler-h", 225, -6, 19, true, 538);
drawRuler("ruler-v", 35, -1, 14, false, 282);
```
